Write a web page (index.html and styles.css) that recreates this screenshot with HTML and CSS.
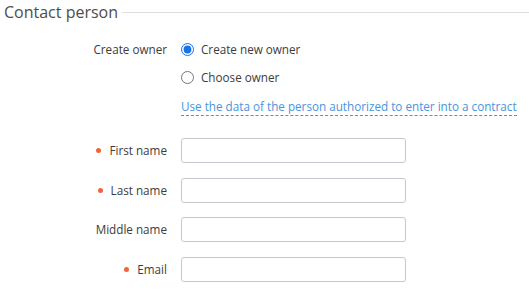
FILE: index.html
```html
<!DOCTYPE html>
<html lang="en">
<head>
<meta charset="UTF-8">
<meta name="viewport" content="width=device-width, initial-scale=1.0">
<title>Contact person</title>
<link rel="stylesheet" href="styles.css">
</head>
<body>

<div class="section">
  <div class="section-head">
    <h2>Contact person</h2>
    <div class="rule"></div>
  </div>

  <div class="form">
    <div class="row owner-row">
      <div class="label">Create owner</div>
      <div class="options">
        <label class="option">
          <input type="radio" name="owner" checked>
          <span>Create new owner</span>
        </label>
        <label class="option">
          <input type="radio" name="owner">
          <span>Choose owner</span>
        </label>
        <a class="use-link" href="#">Use the data of the person authorized to enter into a contract</a>
      </div>
    </div>

    <div class="fields">
      <div class="row">
        <div class="label required">First name</div>
        <input class="text-input" type="text">
      </div>
      <div class="row">
        <div class="label required">Last name</div>
        <input class="text-input" type="text">
      </div>
      <div class="row">
        <div class="label">Middle name</div>
        <input class="text-input" type="text">
      </div>
      <div class="row">
        <div class="label required">Email</div>
        <input class="text-input" type="text">
      </div>
    </div>
  </div>
</div>

</body>
</html>
```

FILE: styles.css
```css
body {
  margin: 0;
  font-family: "Open Sans", Arial, sans-serif;
  font-size: 11.7px;
  color: #3c3c3c;
  background-color: #fff;
}
.section-head {
  display: flex;
  align-items: center;
  height: 24px;
  padding-left: 4px;
}
.section-head h2 {
  margin: 0;
  font-size: 16px;
  font-weight: normal;
  color: #4d4d4d;
  line-height: 24px;
}
.rule {
  flex: 1;
  height: 1px;
  margin-left: 4px;
  margin-top: 1px;
  background-color: #dcdee2;
}
.form {
  margin-top: 11px;
}
.row {
  display: flex;
  align-items: flex-start;
}
.label {
  width: 167px;
  flex-shrink: 0;
  text-align: right;
  margin-right: 14px;
  line-height: 28px;
}
.fields .label {
  line-height: 25px;
}
.required::before {
  content: "";
  display: inline-block;
  width: 5px;
  height: 5px;
  border-radius: 50%;
  background-color: #f0643c;
  margin-right: 8px;
  vertical-align: 2px;
}
.options {
  display: flex;
  flex-direction: column;
  align-items: flex-start;
}
.option {
  display: flex;
  align-items: center;
  height: 28px;
  cursor: pointer;
}
.option input {
  margin: 0 7px 0 0;
  width: 13px;
  height: 13px;
  accent-color: #1a73e8;
}
.use-link {
  margin-top: 7px;
  line-height: 17px;
  color: #4a94dc;
  text-decoration: none;
  border-bottom: 1px dashed #4a94dc;
}
.fields {
  display: flex;
  flex-direction: column;
  gap: 14.5px;
  margin-top: 22px;
}
.text-input {
  width: 225px;
  height: 25px;
  box-sizing: border-box;
  margin: 0;
  border: 1px solid #c5c9cf;
  border-radius: 3px;
  padding: 0 6px;
  font-family: inherit;
  font-size: 12px;
}
```
